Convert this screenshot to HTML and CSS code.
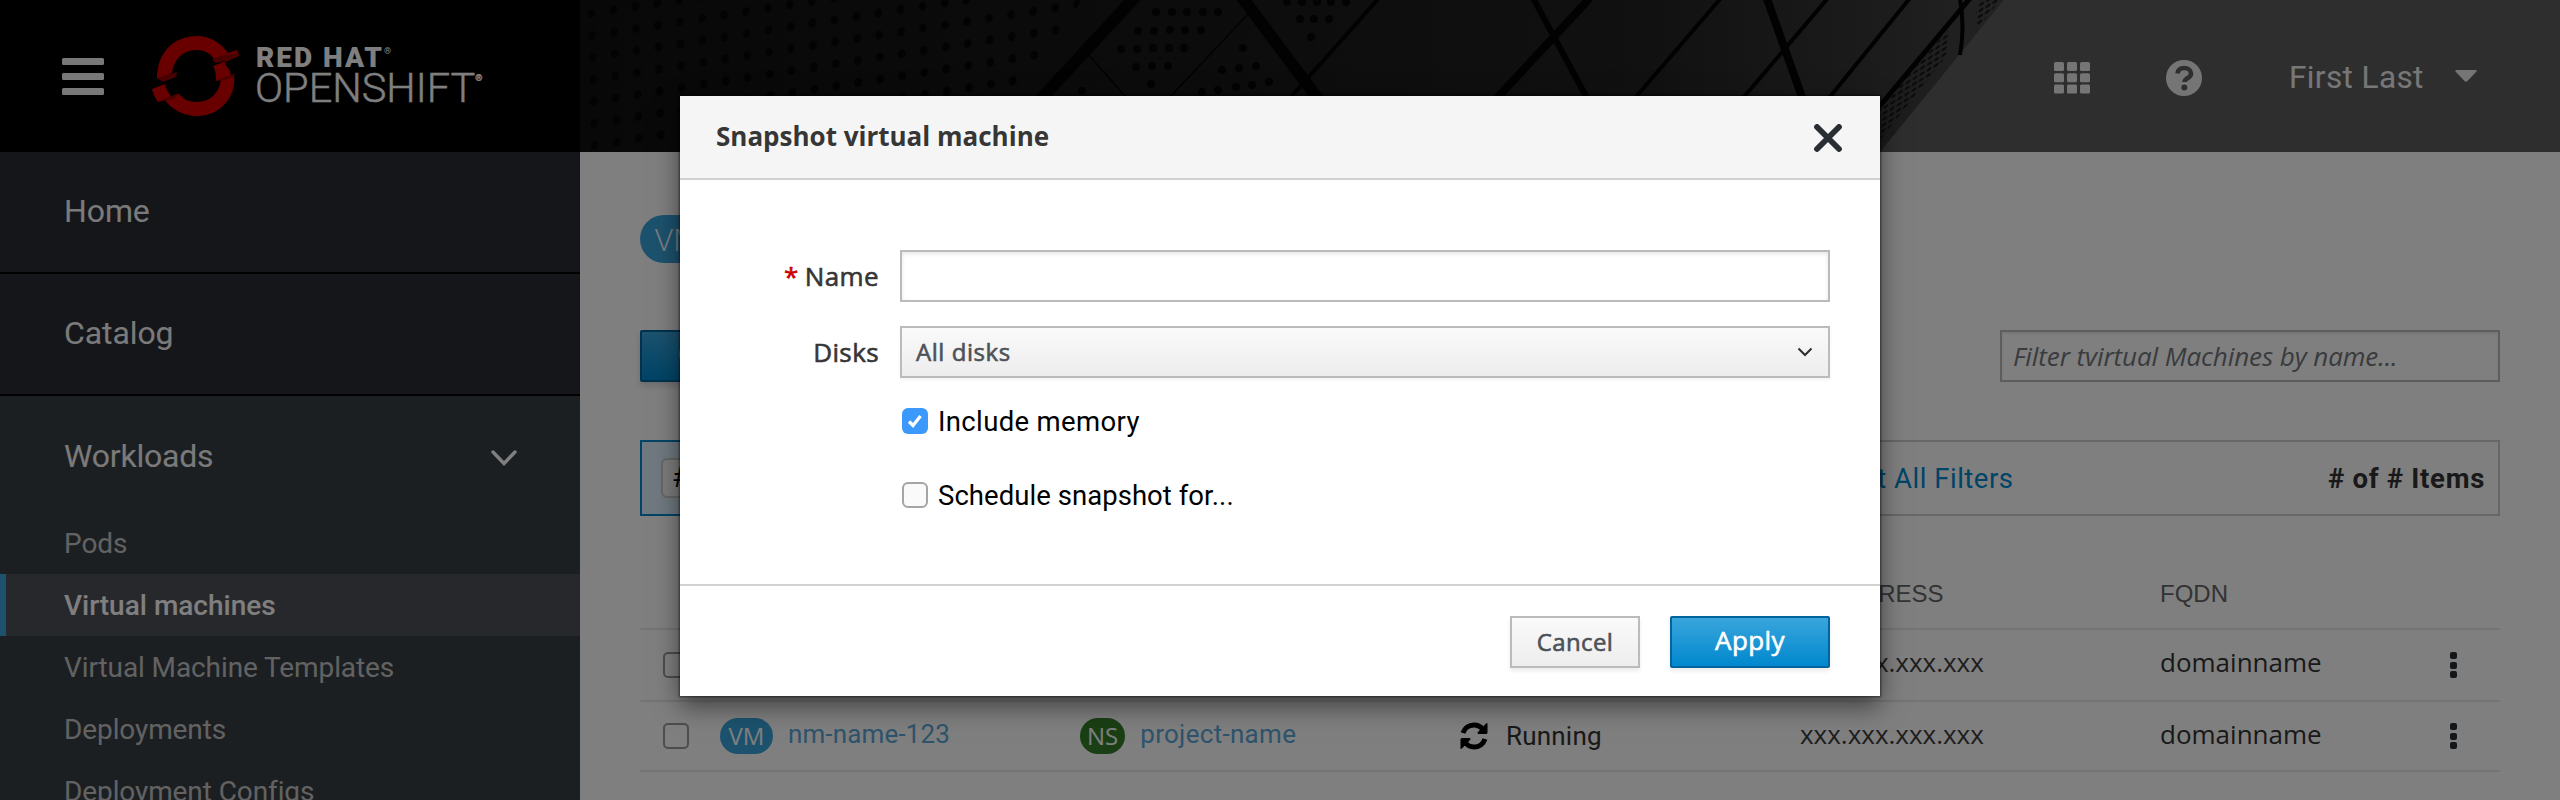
FILE: index.html
```html
<!DOCTYPE html>
<html lang="en">
<head>
<meta charset="utf-8">
<title>Virtual machines</title>
<link rel="stylesheet" href="styles.css">
</head>
<body>
<div class="app">
  <header class="masthead">
    <div class="brand">
      <div class="burger"><i></i><i></i><i></i></div>
      <svg class="logo" width="88" height="82" viewBox="0 0 88 82">
        <path fill="#d00000" d="M5 44 C5 15 24 1 45 1 C58 1 69 8 76 18 L62 24 C58 18 52 15 45 15 C30 15 22 25 20 38 Z"/>
        <path fill="#d00000" d="M82 39 C85 62 68 81 45 81 C31 81 19 74 12 64 L27 59 C31 64 37 67 45 67 C58 67 67 58 69 45 Z"/>
        <path fill="#d00000" d="M67 21 L85 15 L87 21 L73 27 L73 29 L78 36 L79 41 L64 46 C64 38 63 34 61 31 L74 26 Z"/>
        <path fill="#d00000" d="M0 54 L13 49 C14 54 17 59 20 62 L6 67 C3 63 1 58 0 54 Z"/>
        <path fill="#930000" d="M60 25 L67 21 L87 18 L87 21 L73 26 L64 28 Z M65 45 L82 39 L82 42 L69 46 Z M5 43 L25 37 L24 42 L11 47 Z M12 64 L27 58 L22 64 L6 67 Z"/>
      </svg>
      <div class="wordmark"><div class="wm-top">RED HAT<sup>®</sup></div><div class="wm-bottom">OPENSHIFT<sup>®</sup></div></div>
    </div>
    <div class="bar">
      <svg class="art" width="1980" height="152" viewBox="580 0 1980 152">
        <defs>
          <linearGradient id="roof" x1="580" x2="2000" y1="0" y2="0" gradientUnits="userSpaceOnUse"><stop offset="0" stop-color="#111"/><stop offset=".45" stop-color="#191919"/><stop offset=".75" stop-color="#222"/><stop offset=".93" stop-color="#3a3a3a"/><stop offset="1" stop-color="#464646"/></linearGradient>
          <pattern id="holes" width="20" height="20" patternUnits="userSpaceOnUse" patternTransform="matrix(1.1 -.17 .03 1.1 580 4)"><ellipse cx="10" cy="10" rx="3.6" ry="4.2" fill="#070707"/></pattern>
          <pattern id="mesh" width="7" height="6" patternUnits="userSpaceOnUse" patternTransform="matrix(1 -.6 -.1 1 1880 0)"><ellipse cx="3.5" cy="3" rx="2.6" ry="1.6" fill="#161616"/></pattern>
        </defs>
        <rect x="580" width="1980" height="152" fill="#5d5d5d"/>
        <path d="M580 0H2004L1880 152H580Z" fill="url(#roof)"/>
        <path d="M580 0H1082L1018 96V152H580Z" fill="url(#holes)"/>
        <path d="M1948 30V54L1880 140V108Z M1980 0H2000L1976 30V10Z" fill="url(#mesh)"/>
        <g fill="#060606">
          <circle cx="1156" cy="12" r="4"/><circle cx="1172" cy="12" r="4"/><circle cx="1187" cy="12" r="4"/><circle cx="1203" cy="12" r="4"/><circle cx="1218" cy="12" r="4"/>
          <circle cx="1138" cy="31" r="4"/><circle cx="1154" cy="31" r="4"/><circle cx="1170" cy="30" r="4"/><circle cx="1185" cy="30" r="4"/><circle cx="1201" cy="30" r="4"/>
          <circle cx="1121" cy="49" r="4"/><circle cx="1137" cy="49" r="4"/><circle cx="1153" cy="48" r="4"/><circle cx="1169" cy="48" r="4"/><circle cx="1184" cy="48" r="4"/>
          <circle cx="1136" cy="67" r="4"/><circle cx="1152" cy="66" r="4"/><circle cx="1168" cy="66" r="4"/><circle cx="1151" cy="84" r="4"/><circle cx="1082" cy="91" r="4"/>
          <circle cx="1243" cy="48" r="4"/><circle cx="1222" cy="70" r="4"/><circle cx="1239" cy="68" r="4"/><circle cx="1256" cy="66" r="4"/>
          <circle cx="1202" cy="92" r="4"/><circle cx="1218" cy="90" r="4"/><circle cx="1236" cy="87" r="4"/><circle cx="1252" cy="85" r="4"/><circle cx="1269" cy="82" r="4"/>
          <circle cx="1287" cy="2" r="4"/><circle cx="1302" cy="2" r="4"/><circle cx="1317" cy="2" r="4"/><circle cx="1331" cy="2" r="4"/><circle cx="1346" cy="2" r="4"/>
          <circle cx="1300" cy="19" r="4"/><circle cx="1314" cy="19" r="4"/><circle cx="1329" cy="19" r="4"/><circle cx="1311" cy="37" r="4"/>
        </g>
        <g stroke="#040404" fill="none">
          <path stroke-width="12" d="M1136 -4L1040 100M1241 -4L1319 100"/>
          <path stroke-width="1.5" d="M1250 12L1171 96M1087 53L1125 96"/>
          <path stroke-width="4" d="M1379 -2L1290 98M1721 -2L1635 98M1828 -2L1743 98M1910 -2L1829 98"/>
          <path stroke-width="8" d="M1590 -2L1497 98M1766 -4L1803 100"/>
          <path stroke-width="6" d="M1533 -2L1587 98"/>
          <path stroke-width="5" d="M1972 -4L1878 108"/>
          <path stroke-width="4" d="M1960 -1Q1965 27 1960 55"/>
        </g>
      </svg>
      <svg class="apps" width="36" height="32" viewBox="0 0 36 32" fill="#eaeaea"><g id="r"><rect width="10" height="9" rx="1.5"/><rect x="13" width="10" height="9" rx="1.5"/><rect x="26" width="10" height="9" rx="1.5"/></g><use href="#r" y="11.3"/><use href="#r" y="22.6"/></svg>
      <svg class="help" width="36" height="36" viewBox="0 0 36 36"><circle cx="18" cy="18" r="18" fill="#eaeaea"/><path d="M11.5 13.5C12 9.5 14.5 8 18 8c4 0 7 2.300 7 5.500 0 5-6.500 4.500-6.500 8.500" fill="none" stroke="#5d5d5d" stroke-width="4.600"/><circle cx="18.300" cy="27.500" r="3" fill="#5d5d5d"/></svg>
      <span class="user">First Last</span>
      <svg class="caret" width="22" height="12" viewBox="0 0 22 12"><path d="M1 0H21Q22 .5 21.500 1.500L12.500 11Q11 12.500 9.500 11L.5 1.500Q0 .5 1 0Z" fill="#eaeaea"/></svg>
    </div>
  </header>
  <div class="body">
    <nav class="side">
      <a class="top">Home</a>
      <a class="top">Catalog</a>
      <div class="group">
        <a class="top open">Workloads<svg width="26" height="16" viewBox="0 0 26 16"><path d="M2 2L13 13.500L24 2" fill="none" stroke="#fff" stroke-width="3.400" stroke-linecap="round"/></svg></a>
        <a class="sub">Pods</a>
        <a class="sub active">Virtual machines</a>
        <a class="sub">Virtual Machine Templates</a>
        <a class="sub">Deployments</a>
        <a class="sub">Deployment Configs</a>
      </div>
    </nav>
    <main class="main">
      <div class="heading"><span class="kind kind-lg">VM</span></div>
      <div class="tools"><span class="create">Create</span><span class="search">Filter tvirtual Machines by name...</span></div>
      <div class="filters">
        <div class="selected"><span class="chip">#</span></div>
        <span class="reset">Reset All Filters</span>
        <span class="count"># of # Items</span>
      </div>
      <div class="table">
        <div class="tr th"><span></span><span></span><span></span><span></span><span>IP ADDRESS</span><span>FQDN</span><span></span></div>
        <div class="tr first"><i class="box"></i><span></span><span></span><span></span><span class="ip">xxx.xxx.xxx.xxx</span><span class="host">domainname</span><b class="kebab"><i></i><i></i><i></i></b></div>
        <div class="tr"><i class="box"></i><span class="cell"><span class="kind">VM</span><a class="link">nm-name-123</a></span><span class="cell"><span class="kind ns">NS</span><a class="link project">project-name</a></span><span class="cell running"><svg width="28" height="28" viewBox="0 0 28 28"><path d="M3 11C4.500 6.500 8.500 3 14 3c4 0 7 2 9 4.500M25 17c-1.500 4.500-5.500 8-11 8-4 0-7-2-9-4.500" fill="none" stroke="#000" stroke-width="5"/><path d="M27.500 1V10.500Q27.500 12 26 12H18Q17 11 18 10L26 1.500ZM.5 27V17.500Q.5 16 2 16H10Q11 17 10 18L2 26.500Z"/></svg>Running</span><span class="ip">xxx.xxx.xxx.xxx</span><span class="host">domainname</span><b class="kebab"><i></i><i></i><i></i></b></div>
      </div>
    </main>
  </div>
  <div class="backdrop"></div>
  <section class="dialog">
    <header class="dialog-head"><h1>Snapshot virtual machine</h1><svg width="30" height="28" viewBox="0 0 30 28"><path d="M4 3L26 25M26 3L4 25" stroke="#292e34" stroke-width="5.800" stroke-linecap="round"/></svg></header>
    <div class="dialog-body">
      <div class="field"><label><em>*</em>Name</label><div class="input"></div></div>
      <div class="field"><label>Disks</label><div class="select"><span>All disks</span><svg width="16" height="10" viewBox="0 0 16 10"><path d="M1.500 1.500L8 8L14.500 1.500" fill="none" stroke="#292e34" stroke-width="2"/></svg></div></div>
      <div class="check"><span class="tick on"><svg width="16" height="14" viewBox="0 0 16 14"><path d="M2 7.500L6 11.500L13.500 2" fill="none" stroke="#fff" stroke-width="3.200"/></svg></span>Include memory</div>
      <div class="check later"><span class="tick"></span>Schedule snapshot for...</div>
    </div>
    <footer class="dialog-foot"><span class="btn">Cancel</span><span class="btn primary">Apply</span></footer>
  </section>
</div>
</body>
</html>
```
FILE: styles.css
```css
* { box-sizing: border-box; }
body { margin: 0; font-family: "Open Sans", "Noto Sans", sans-serif; }
.app { position: relative; width: 2560px; height: 800px; overflow: hidden; background: #fff; }

.masthead { display: flex; height: 152px; }
.brand { display: flex; width: 580px; background: #000; padding-left: 62px; }
.burger { display: flex; flex-direction: column; gap: 8px; margin-top: 57.5px; width: 42px; }
.burger i { height: 7px; border-radius: 1.5px; background: #f0f0f0; }
.logo { margin: 35px 0 0 48px; }
.wordmark { margin: 42px 0 0 15px; font-family: Roboto, sans-serif; color: #fff; }
.wm-top { font-size: 28px; font-weight: 900; line-height: 32px; letter-spacing: 2px; padding-left: 1px; }
.wm-bottom { font-size: 41.5px; font-weight: 300; line-height: 28px; letter-spacing: 0; -webkit-text-stroke: .4px; }
.wordmark sup { display: inline-block; font-size: 9px; line-height: 9px; font-weight: 400; letter-spacing: 0; vertical-align: top; }
.wm-top sup { margin-top: 5px; }
.wm-bottom sup { margin-top: 0; }

.bar { position: relative; display: flex; flex: 1; align-items: flex-start; padding-left: 1474px; }
.art { position: absolute; left: 0; top: 0; }
.bar > :not(.art) { position: relative; flex: none; }
.apps { margin-top: 62px; }
.help { margin: 60px 0 0 76px; }
.user { margin: 55px 0 0 87px; width: 166px; font: 400 31.5px/46px Roboto, sans-serif; letter-spacing: .4px; color: #eee; }
.caret { margin-top: 70px; }

.body { display: flex; height: 648px; }
.side { width: 580px; background: #393f44; font-family: Roboto, sans-serif; }
.side a { display: flex; align-items: center; color: #f5f5f5; }
.side .top { height: 122px; padding: 0 63px 2px 64px; font-size: 32px; letter-spacing: -.1px; background: #2a2c34; border-bottom: 2px solid #020202; }
.side .open { justify-content: space-between; height: 116px; padding-top: 4px; padding-bottom: 0; background: none; border: 0; letter-spacing: -.2px; }
.open svg { margin-top: 4px; }
.side .sub { height: 62px; padding-left: 64px; font-size: 28px; letter-spacing: -.1px; color: #c4c4c4; }
.side .active { padding-left: 58px; border-left: 6px solid #39a5dc; background: #4f5058; color: #fff; font-weight: 500; letter-spacing: 0; }

.main { width: 1980px; padding: 63px 60px 0; }
.heading { height: 48px; }
.kind { display: inline-block; flex: none; height: 36px; padding: 0 8.500px; border-radius: 18px; background: #39a5dc; color: #fff; font-size: 24px; line-height: 36px; }
.kind-lg { height: 48px; padding: 0 15px; border-radius: 24px; font-size: 31px; font-weight: 300; line-height: 48px; }
.ns { background: #347f28; padding: 0 7px; }
.tools { display: flex; justify-content: space-between; margin-top: 67px; height: 52px; }
.create { width: 150px; border: 2px solid #00659c; border-radius: 2px; background: linear-gradient(#39a5dc, #0088ce); color: #fff; font: 500 26px/46px Roboto, sans-serif; padding-left: 36px; box-shadow: 0 4px 6px rgba(0,0,0,.15); }
.search { width: 500px; border: 2px solid #bbb; padding-left: 11px; font-size: 26px; line-height: 48px; font-style: italic; color: #72767b; box-shadow: inset 0 2px 2px rgba(0,0,0,.07); white-space: nowrap; letter-spacing: -.08px; }
.filters { display: flex; margin-top: 58px; height: 76px; border: 2px solid #cecece; font: 400 27.5px/74px Roboto, sans-serif; }
.selected { width: 1100px; margin: -2px 0 -2px -2px; border: 2px solid #0088ce; background: #def3ff; padding: 16px 0 0 19px; }
.chip { display: block; width: 90px; height: 40px; border: 2px solid #ccc; border-radius: 6px; background: #f8f8f8; line-height: 36px; padding-left: 9px; }
.reset { flex: 1; margin-left: 75px; color: #0088ce; letter-spacing: .5px; }
.count { padding-right: 13px; font-weight: 700; color: #333; letter-spacing: .7px; }

.tr { display: grid; grid-template-columns: 80px 360px 380px 340px 360px 290px 50px; height: 70px; border-bottom: 2px solid #e9e9e9; align-items: center; font-size: 26px; color: #333; }
.th { height: 114px; padding-top: 43px; font: 400 24px "Liberation Sans", sans-serif; color: #666; }
.first { height: 72px; }
.first .ip, .first .host { padding-bottom: 7px; }
.box { width: 26px; height: 26px; margin-left: 23px; border: 2px solid #9a9a9a; border-radius: 5px; }
.cell { display: flex; align-items: center; }
.ip, .host { padding-bottom: 5px; }
.ip { color: #3c3c3c; }
.link { margin-left: 15px; padding-bottom: 5px; color: #5ba8d8; font-family: Roboto, sans-serif; letter-spacing: .15px; }
.project { letter-spacing: .3px; }
.running { font: 400 26px Roboto, sans-serif; color: #333; letter-spacing: .2px; gap: 18px; padding: 0; }
.kebab { display: flex; flex-direction: column; gap: 2.500px; }
.kebab i { width: 7px; height: 7px; border-radius: 2px; background: #292e34; }

.backdrop { position: absolute; inset: 0; background: rgba(0,0,0,.5); }

.dialog { position: absolute; left: 680px; top: 96px; width: 1200px; height: 600px; background: #fff; box-shadow: 0 0 2px 1px rgba(0,0,0,.5), 0 10px 24px rgba(0,0,0,.5); color: #363636; }
.dialog-head { display: flex; justify-content: space-between; height: 84px; padding: 0 37px 0 36px; background: #f5f5f5; border-bottom: 2px solid #d1d1d1; }
.dialog-head h1 { margin: 0; font-size: 26px; font-weight: 700; line-height: 81px; }
.dialog-head svg { margin-top: 28px; }
.dialog-body { height: 404px; padding: 70px 50px 0 0; }
.field { display: grid; grid-template-columns: 199px 930px; column-gap: 21px; height: 52px; margin-bottom: 24px; }
.field label { text-align: right; font-size: 26px; -webkit-text-stroke: .6px; letter-spacing: .4px; line-height: 52px; }
.field em { font-style: normal; color: #c00; margin-right: 6px; }
.input, .select { border: 2px solid #bbb; }
.input { box-shadow: inset 0 2px 4px rgba(0,0,0,.1); }
.select { display: flex; justify-content: space-between; align-items: center; padding: 0 15px 0 14px; background: linear-gradient(#fafafa, #ededed); color: #4d5258; font-size: 24px; -webkit-text-stroke: .6px; line-height: 46px; letter-spacing: .55px; box-shadow: 0 2px 3px rgba(0,0,0,.05); }
.check { display: flex; align-items: center; height: 26px; margin: 0 0 0 222px; gap: 10px; font: 400 27.5px Roboto, sans-serif; color: #000; letter-spacing: .35px; }
.later { margin-top: 48px; letter-spacing: .05px; }
.field + .check { margin-top: 30px; }
.tick { display: flex; align-items: center; justify-content: center; width: 26px; height: 26px; border: 2px solid #a5a5a5; border-radius: 6px; background: #fafafa; }
.on { border: 0; background: #3b99fc; }
.dialog-foot { display: flex; justify-content: flex-end; gap: 30px; height: 112px; border-top: 2px solid #d1d1d1; padding: 30px 50px 0 0; }
.btn { width: 130px; height: 52px; border: 2px solid #bbb; background: linear-gradient(#fafafa, #ededed); color: #4d5258; font-size: 24px; -webkit-text-stroke: .6px; letter-spacing: .4px; line-height: 47px; text-align: center; box-shadow: 0 3px 4px rgba(0,0,0,.08); }
.primary { width: 160px; border-color: #00659c; border-radius: 2px; background: linear-gradient(#39a5dc, #0088ce); color: #fff; font-size: 26px; line-height: 45px; }
```
